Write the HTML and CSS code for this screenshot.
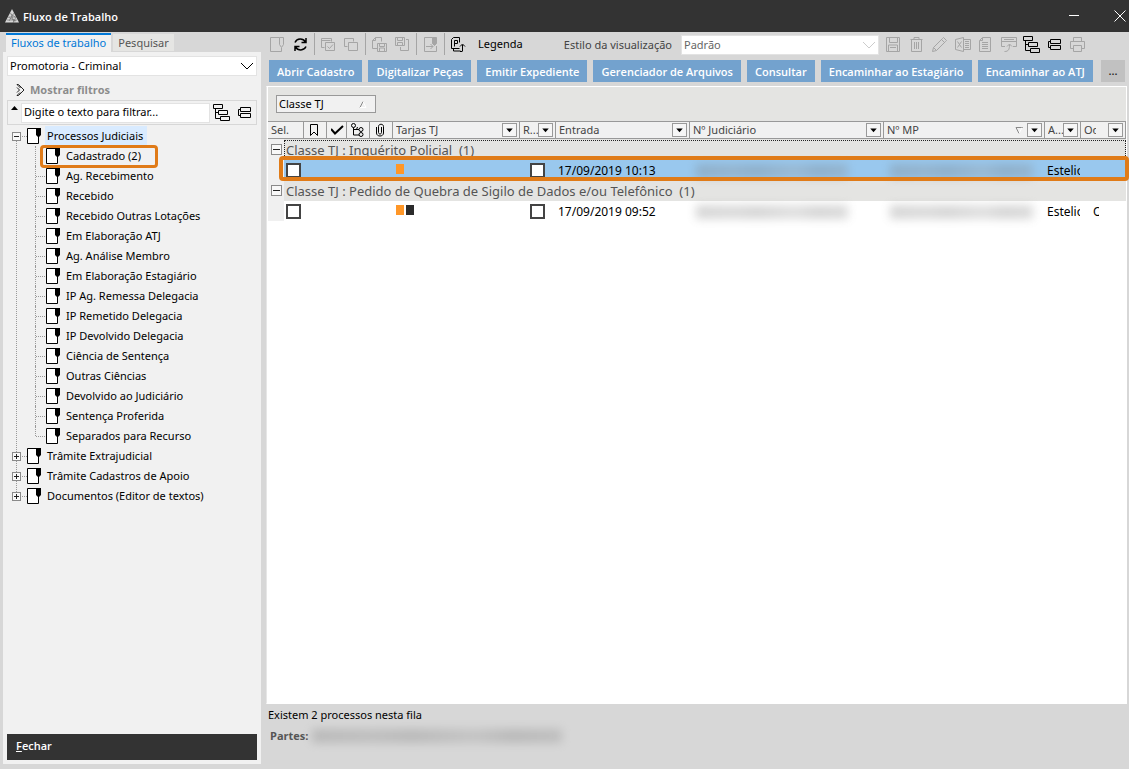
FILE: index.html
```html
<!DOCTYPE html>
<html lang="pt-BR">
<head>
<meta charset="utf-8">
<title>Fluxo de Trabalho</title>
<link rel="stylesheet" href="styles.css">
</head>
<body>
<svg class="defs" aria-hidden="true">
  <symbol id="page" viewBox="0 0 14 16"><path d="M.5.5h9v6l2 3v6h-11z" fill="#fff" stroke="none"/><path d="M10 .5H.5v15h11V8" fill="none" stroke="#000"/><path d="M9 0h5v7l-2 2h-1L9 7z" fill="#000" stroke="none"/></symbol>
  <symbol id="outline" viewBox="0 0 17 17"><path d="M.5.5h9v4h-9zM5.500 6.500h9v4h-9zM7.500 12.500h9v4h-9zM2.500 5v9.500H7M2.500 8.500H5"/></symbol>
  <symbol id="cards" viewBox="0 0 17 17"><path d="M4.500 3.500h10v4h-10zM4.500 9.500h10v4h-10zM4 5.500H2.500v6H4"/></symbol>
  <symbol id="down" viewBox="0 0 13 13"><path d="M3 5h7L6.500 9z" fill="#000" stroke="none"/></symbol>
</svg>

<header class="titlebar">
  <svg class="logo" viewBox="0 0 14 14"><path d="M7 0L14 13.500H0z" fill="#d8d8d8"/><path d="M5 4l5 4M3 8l8 4M9 4L4 12M11 8l-3 6M2 11h10M4 8h7M6 5l3 8" stroke="#555" stroke-width=".5" fill="none"/></svg>
  <h1>Fluxo de Trabalho</h1>
  <button class="win" aria-label="Minimizar"><svg viewBox="0 0 12 12"><path d="M1 5.500h10"/></svg></button>
  <button class="win" aria-label="Fechar janela"><svg viewBox="0 0 12 12"><path d="M.5.5l11 11M11.500.5l-11 11"/></svg></button>
</header>

<div class="window">
  <aside class="side">
    <nav class="tabs"><button class="tab active">Fluxos de trabalho</button><button class="tab">Pesquisar</button></nav>
    <div class="sidebody">
      <div class="combo promo">
        <select aria-label="Promotoria"><option>Promotoria - Criminal</option></select>
        <svg class="chev" viewBox="0 0 14 8"><path d="M1 1l6 6 6-6"/></svg>
      </div>
      <button class="filters"><svg viewBox="0 0 9 12"><path d="M1 .5h1.500L8 6l-5.500 5.500H1L4 8.500M1 .5l3.500 3.500M1 3.500L3.500 6 1 8.500"/></svg>Mostrar filtros</button>
      <div class="search">
        <svg class="up" viewBox="0 0 7 4"><path d="M0 4l3.500-4L7 4z"/></svg>
        <input type="text" aria-label="Filtrar" value="Digite o texto para filtrar...">
        <button class="tool" aria-label="Expandir"><svg><use href="#outline"/></svg></button>
        <button class="tool" aria-label="Recolher"><svg><use href="#cards"/></svg></button>
      </div>
      <ul class="tree">
        <li><div class="node"><button class="toggle" aria-label="Recolher"></button><svg><use href="#page"/></svg><span class="sel">Processos Judiciais</span></div>
          <ul>
            <li class="leaf marked"><svg><use href="#page"/></svg><span>Cadastrado (2)</span></li>
            <li class="leaf"><svg><use href="#page"/></svg><span>Ag. Recebimento</span></li>
            <li class="leaf"><svg><use href="#page"/></svg><span>Recebido</span></li>
            <li class="leaf"><svg><use href="#page"/></svg><span>Recebido Outras Lotações</span></li>
            <li class="leaf"><svg><use href="#page"/></svg><span>Em Elaboração ATJ</span></li>
            <li class="leaf"><svg><use href="#page"/></svg><span>Ag. Análise Membro</span></li>
            <li class="leaf"><svg><use href="#page"/></svg><span>Em Elaboração Estagiário</span></li>
            <li class="leaf"><svg><use href="#page"/></svg><span>IP Ag. Remessa Delegacia</span></li>
            <li class="leaf"><svg><use href="#page"/></svg><span>IP Remetido Delegacia</span></li>
            <li class="leaf"><svg><use href="#page"/></svg><span>IP Devolvido Delegacia</span></li>
            <li class="leaf"><svg><use href="#page"/></svg><span>Ciência de Sentença</span></li>
            <li class="leaf"><svg><use href="#page"/></svg><span>Outras Ciências</span></li>
            <li class="leaf"><svg><use href="#page"/></svg><span>Devolvido ao Judiciário</span></li>
            <li class="leaf"><svg><use href="#page"/></svg><span>Sentença Proferida</span></li>
            <li class="leaf"><svg><use href="#page"/></svg><span>Separados para Recurso</span></li>
          </ul>
        </li>
        <li><div class="node"><button class="toggle plus" aria-label="Expandir"></button><svg><use href="#page"/></svg><span>Trâmite Extrajudicial</span></div></li>
        <li><div class="node"><button class="toggle plus" aria-label="Expandir"></button><svg><use href="#page"/></svg><span>Trâmite Cadastros de Apoio</span></div></li>
        <li><div class="node"><button class="toggle plus" aria-label="Expandir"></button><svg><use href="#page"/></svg><span>Documentos (Editor de textos)</span></div></li>
      </ul>
      <button class="close"><u>F</u>echar</button>
    </div>
  </aside>

  <main class="main">
    <div class="toolbar">
      <button class="tool off" aria-label="Novo"><svg viewBox="0 0 17 17"><path d="M10.500 1.500h-9v14h11V12M10.500 1.500h4v7l-2 3-2-3z"/></svg></button>
      <button class="tool" aria-label="Atualizar"><svg viewBox="0 0 17 17"><path class="bold" d="M3 6.500C5 2 11 2 13.500 6M14 2v4.500H9.500M14 10.500c-2 4.500-8 4.500-10.500.5M3 15v-4.500h4.500"/></svg></button>
      <i class="sep"></i>
      <button class="tool off" aria-label="Selecionar"><svg viewBox="0 0 17 17"><path d="M4.500 11.500h-3v-9h10v3M1.500 4.500h9M5.500 6.500h9v8h-9zM7.500 10.500l2 2 3.500-4"/></svg></button>
      <button class="tool off" aria-label="Copiar"><svg viewBox="0 0 17 17"><path d="M4.500 10.500h-3v-8h9v3M5.500 6.500h9v8h-9z"/></svg></button>
      <i class="sep"></i>
      <button class="tool off" aria-label="Salvar página"><svg viewBox="0 0 17 17"><path d="M6 12.500H1.500v-8l3-3h6v4M4.500 1.500v3h-3M6.500 7.500h9v8h-9zM8.500 7.500v3h5v-3M8.500 15v-3h5v3"/></svg></button>
      <button class="tool off" aria-label="Salvar em"><svg viewBox="0 0 17 17"><path d="M1.500 1.500h9v8h-9zM3.500 1.500v3h5v-3M3.500 9V6.500h5V9M12 3.500h2.500v11h-8V11"/></svg></button>
      <i class="sep"></i>
      <button class="tool off" aria-label="Mover"><svg viewBox="0 0 17 17"><path d="M10.500 1.500h-8v14h12V10M4 10.500h7M8.500 8l2.500 2.500L8.500 13"/><path class="fill" d="M10.500 1.500h4v6l-2 2-2-2z"/></svg></button>
      <i class="sep"></i>
      <button class="tool" aria-label="Protocolo"><svg viewBox="0 0 17 17"><path d="M9.500 12.500h-8v-9l2-2h6v5M3.500 13v2h7M4.500 10.500v-6h3v3h-3M12.500 15V9M10 10.500l2.500-2.500L15 10.500M10 15.500h2.500"/></svg></button>
      <button class="legend">Legenda</button>
      <label class="stylelabel" for="vis">Estilo da visualização</label>
      <div class="combo vis"><select id="vis"><option>Padrão</option></select><svg class="chev" viewBox="0 0 14 8"><path d="M1 1l6 6 6-6"/></svg></div>
      <button class="tool off" aria-label="Salvar"><svg viewBox="0 0 17 17"><path d="M1.500 1.500h13v14h-13zM4.500 1.500v5h8v-5M3.500 15v-6h9v6M5 11.500h6"/></svg></button>
      <button class="tool off" aria-label="Excluir"><svg viewBox="0 0 17 17"><path d="M2.500 3.500h12M3.500 3.500v12h10v-12M6 3V1.500h5V3M6.500 6v7M8.500 6v7M10.500 6v7"/></svg></button>
      <button class="tool off" aria-label="Editar"><svg viewBox="0 0 17 17"><path d="M1.500 15.500l1-4 9-9 1-1 3 3-1 1-9 9zM10.500 3.500l3 3M2.500 11.500l3 3"/></svg></button>
      <button class="tool off" aria-label="Exportar planilha"><svg viewBox="0 0 17 17"><path d="M1.500 3.500l8-2v14l-8-2zM10 3.500h6.500v10H10M11 5.500h4M11 7.500h4M11 9.500h4M11 11.500h4M3.500 5.500l4 6M7.500 5.500l-4 6"/></svg></button>
      <button class="tool off" aria-label="Documento"><svg viewBox="0 0 17 17"><path d="M5.500 1.500h8v14h-11v-11zM5.500 2v2.500H3M5 6.500h6M5 8.500h6M5 10.500h6M5 12.500h6"/></svg></button>
      <button class="tool off" aria-label="Enviar janela"><svg viewBox="0 0 17 17"><path d="M5 10.500H1.500v-9h15v9H13M1.500 5.500h15M4 3.500h10M4.500 15.500c4 0 5-2 5-7M7 10.500L9.500 8l2.500 2.500"/></svg></button>
      <button class="tool" aria-label="Expandir grupos"><svg><use href="#outline"/></svg></button>
      <button class="tool" aria-label="Recolher grupos"><svg><use href="#cards"/></svg></button>
      <button class="tool off" aria-label="Imprimir"><svg viewBox="0 0 17 17"><path d="M4.500 5V1.500h8V5M4 12.500H1.500v-7h14v7H13M4.500 9.500h8v6h-8z"/></svg></button>
    </div>

    <div class="actions">
      <button>Abrir Cadastro</button><button>Digitalizar Peças</button><button>Emitir Expediente</button><button>Gerenciador de Arquivos</button><button>Consultar</button><button>Encaminhar ao Estagiário</button><button>Encaminhar ao ATJ</button><button class="more">...</button>
    </div>

    <section class="grid">
      <div class="groupby"><button>Classe TJ<svg viewBox="0 0 8 7"><path d="M1 6.500L4 .5" stroke="#888"/><path d="M4 .5l3 6H1" stroke="#fff"/></svg></button></div>
      <table>
        <colgroup><col class="c36"><col class="c23"><col class="c20"><col class="c23"><col class="c23"><col class="c127"><col class="c36"><col class="c134"><col><col class="c161"><col class="c36"><col class="c45"></colgroup>
        <thead><tr>
          <th>Sel.</th>
          <th aria-label="Marcador"><svg class="hi" viewBox="0 0 14 14"><path d="M2.500 1.500h7v11L6 9l-3.500 3.500z"/></svg></th>
          <th aria-label="Confirmado"><svg class="hi thick" viewBox="0 0 14 14"><path d="M0 6l4 4.500L12 3"/></svg></th>
          <th aria-label="Vínculos"><svg class="hi" viewBox="0 0 14 14"><path d="M2.500 4.500V12h6M3 6.500h5M5.500 6.500L6.500 4"/><circle cx="2.500" cy="2.500" r="2"/><circle cx="10" cy="6.500" r="2"/><circle cx="10" cy="11.500" r="2"/></svg></th>
          <th aria-label="Anexos"><svg class="hi" viewBox="0 0 14 14"><path d="M2.500 4v6c0 4 7 4 7 0V3.500c0-3-5-3-5 0v6c0 2 3 2 3 0V4"/></svg></th>
          <th><div class="th"><span>Tarjas TJ</span><button class="dd" aria-label="Filtrar"><svg><use href="#down"/></svg></button></div></th>
          <th><div class="th"><span>R...</span><button class="dd" aria-label="Filtrar"><svg><use href="#down"/></svg></button></div></th>
          <th><div class="th"><span>Entrada</span><button class="dd" aria-label="Filtrar"><svg><use href="#down"/></svg></button></div></th>
          <th><div class="th"><span>Nº Judiciário</span><button class="dd" aria-label="Filtrar"><svg><use href="#down"/></svg></button></div></th>
          <th><div class="th"><span>Nº MP</span><svg class="sort" viewBox="0 0 8 7"><path d="M8 .5H1l3 6" stroke="#888"/><path d="M4 6.500l3-6" stroke="#fff"/></svg><button class="dd" aria-label="Filtrar"><svg><use href="#down"/></svg></button></div></th>
          <th><div class="th"><span>A...</span><button class="dd" aria-label="Filtrar"><svg><use href="#down"/></svg></button></div></th>
          <th><div class="th"><span class="cut">Oo</span><button class="dd" aria-label="Filtrar"><svg><use href="#down"/></svg></button></div></th>
        </tr></thead>
        <tbody>
          <tr class="group focus"><td colspan="12"><div class="g"><button class="toggle big" aria-label="Recolher"></button><span>Classe TJ : Inquérito Policial&nbsp; (1)</span></div></td></tr>
          <tr class="row current"><td class="first"><input type="checkbox" aria-label="Selecionar"><i class="callout"></i></td><td></td><td></td><td></td><td></td><td><i class="tag"></i></td><td class="chk"><input type="checkbox" aria-label="R"></td><td>17/09/2019 10:13</td><td><i class="redact"></i></td><td><i class="redact"></i></td><td><div class="clip">Estelio</div></td><td></td></tr>
          <tr class="group"><td colspan="12"><div class="g"><button class="toggle big" aria-label="Recolher"></button><span>Classe TJ : Pedido de Quebra de Sigilo de Dados e/ou Telefônico&nbsp; (1)</span></div></td></tr>
          <tr class="row"><td class="first"><input type="checkbox" aria-label="Selecionar"></td><td></td><td></td><td></td><td></td><td><i class="tag"></i><i class="tag dark"></i></td><td class="chk"><input type="checkbox" aria-label="R"></td><td>17/09/2019 09:52</td><td><i class="redact"></i></td><td><i class="redact"></i></td><td><div class="clip">Estelio</div></td><td><div class="clip tiny">O</div></td></tr>
        </tbody>
      </table>
    </section>
    <footer>
      <p>Existem 2 processos nesta fila</p>
      <div class="parts"><b>Partes:</b><i class="redact"></i></div>
    </footer>
  </main>
</div>
</body>
</html>
```
FILE: styles.css
```css
*, *::before, *::after { box-sizing: border-box; }
body {
  margin: 0;
  height: 100vh;
  display: flex;
  flex-direction: column;
  background: #d7d7d7;
  color: #000;
  font: 11px/16px "Noto Sans", "Open Sans", sans-serif;
  overflow: hidden;
}
button, select, input { font: inherit; color: inherit; margin: 0; padding: 0; border: 0; background: none; border-radius: 0; }
svg { fill: none; stroke: currentColor; flex: none; display: block; }
ul { list-style: none; margin: 0; padding: 0; }
.defs { position: absolute; width: 0; height: 0; }

.titlebar { height: 32px; flex: none; display: flex; align-items: center; background: #333; color: #fff; padding: 0 3px 0 5px; }
.titlebar h1 { flex: 1; margin: 0; padding: 2px 0 0 4px; font: 600 11px/16px "Open Sans", sans-serif; }
.logo { width: 14px; height: 14px; stroke: none; }
.win { width: 12px; height: 12px; margin-left: 34px; }
.win svg { width: 12px; height: 12px; }

.window { flex: 1; min-height: 0; display: flex; gap: 5px; padding-left: 3px; }
.side { width: 258px; flex: none; display: flex; flex-direction: column; padding-bottom: 5px; }
.tabs { display: flex; height: 20px; gap: 2px; padding: 1px 3px 0; }
.tab { padding: 0 5px; background: #e5e5e3; color: #555; height: 17px; margin-top: 1px; }
.tab.active { height: 19px; margin: 0; background: #f1f1f1; color: #0078d7; border-top: 2px solid #0078d7; line-height: 14px; padding-bottom: 2px; }
.sidebody { flex: 1; display: flex; flex-direction: column; background: #f1f1f1; padding: 4px; }

.combo { position: relative; display: flex; background: #fff; border: 1px solid #e3e3e3; }
.combo select { flex: 1; min-width: 0; appearance: none; padding: 0 20px 0 2px; background: transparent; }
.chev { position: absolute; right: 2px; top: 5px; width: 14px; height: 8px; pointer-events: none; }
.promo { height: 20px; }
.filters { display: flex; align-items: center; gap: 5px; height: 18px; margin: 5px 0 1px 9px; color: #8c8c8c; font: 700 11px/16px "Open Sans", sans-serif; }
.filters svg { width: 9px; height: 12px; color: #222; }
.search { display: flex; align-items: center; height: 25px; border: 1px solid #d7d7d7; }
.up { width: 7px; height: 4px; margin: 0 3px 10px 3px; fill: #000; stroke: none; }
.search input { flex: 1; min-width: 0; height: 20px; padding: 0 2px 2px; border: 1px solid #e3e3e3; background: #fff; }
.tool { width: 23px; height: 24px; flex: none; display: grid; place-items: center; }
.tool svg { width: 17px; height: 17px; }
.off { color: #a5a5a5; }
.fill { fill: currentColor; }
.bold { stroke-width: 1.5; }

.tree { position: relative; flex: 1; padding-top: 1px; }
.tree::before { content: ""; position: absolute; left: 9px; top: 15px; height: 356px; border-left: 1px dotted #999; }
.node, .leaf { position: relative; display: flex; align-items: center; height: 20px; }
.node { padding-left: 5px; }
.node > svg, .leaf > svg { width: 14px; height: 16px; }
.node > svg { margin-left: 6px; }
.node > span, .leaf > span { margin-left: 4px; padding: 2px 2px; }
.node::before { content: ""; position: absolute; left: 15px; top: 10px; width: 5px; border-top: 1px dotted #999; }
.leaf { padding-left: 39px; }
.leaf::before { content: ""; position: absolute; left: 28px; top: 0; width: 10px; height: 20px; border-left: 1px dotted #999; }
.leaf:last-child::before { height: 10px; }
.leaf::after { content: ""; position: absolute; left: 29px; top: 10px; width: 9px; border-top: 1px dotted #999; }
.leaf.marked::after { left: 33px; top: -1px; width: 118px; height: 23px; border: 3px solid #e07b18; border-radius: 4px; z-index: 1; }
.node > .sel { background: #d9ebff; padding-right: 4px; }
.toggle { position: relative; width: 9px; height: 9px; border: 1px solid #8a8a8a; background: #f8f8f8; flex: none; }
.toggle::before { content: ""; position: absolute; left: 1px; right: 1px; top: 3px; height: 1px; background: #222; }
.toggle.plus::after { content: ""; position: absolute; top: 1px; bottom: 1px; left: 3px; width: 1px; background: #222; }
.toggle.big { width: 11px; height: 11px; }
.toggle.big::before { top: 4px; }
.close { height: 26px; background: #333; color: #fff; text-align: left; padding: 0 9px 2px; font: 600 11px/16px "Open Sans", sans-serif; }

.main { flex: 1; min-width: 0; display: flex; flex-direction: column; padding-right: 2px; }
.toolbar { display: flex; align-items: center; height: 24px; color: #000; padding-right: 38px; }
.sep { width: 1px; height: 22px; margin: 0 2px; background: #a5a5a5; }
.legend { margin-left: 8px; }
.stylelabel { margin-left: auto; margin-right: 9px; padding-top: 2px; color: #444; }
.vis { width: 198px; height: 20px; margin: 1px 3px 0 0; color: #666; }
.vis .chev { color: #ccc; }

.actions { display: flex; gap: 6px; padding: 4px 2px 0 3px; }
.actions button { flex: 1 0 auto; height: 22px; padding: 2px 8px 0; background: #73a2ce; color: #fff; font: 600 11px/16px "Open Sans", sans-serif; white-space: nowrap; }
.actions .more { flex: none; width: 24px; padding: 0; margin-left: 2px; background: #c1c1c1; color: #222; }

.grid { flex: 1; margin-top: 4px; background: #fff; border: 1px solid #fff; border-left: 1px solid #e6e6e6; padding-left: 1px; }
.groupby { height: 34px; padding: 8px; background: #e4e4e2; }
.groupby button { display: flex; align-items: center; justify-content: space-between; width: 100px; height: 18px; padding: 0 8px 0 2px; background: #f1f1f1; border: 1px solid #999; }
.groupby svg { width: 8px; height: 7px; }
table { width: 100%; table-layout: fixed; border-collapse: separate; border-spacing: 0; }
.c20 { width: 20px; } .c23 { width: 23px; } .c36 { width: 36px; } .c45 { width: 45px; }
.c127 { width: 127px; } .c134 { width: 134px; } .c161 { width: 161px; }
th { height: 18px; padding: 0 0 0 3px; font-weight: 400; text-align: left; color: #444; background: #f1f1f1; border-top: 1px solid #999; border-bottom: 1px solid #999; border-right: 1px solid #999; }
.hi { width: 14px; height: 14px; color: #000; margin-left: 1px; }
.thick { stroke-width: 2; }
.th { display: flex; align-items: center; }
.th span { flex: 1; min-width: 0; overflow: hidden; white-space: nowrap; }
.th .cut { flex: none; width: 12px; margin-right: auto; }
.sort { width: 8px; height: 7px; margin-right: 4px; }
.dd { flex: none; width: 15px; height: 14px; margin-right: 2px; border: 1px solid #999; background: #f6f6f6; }
.dd svg { width: 13px; height: 12px; }
td { padding: 0; }
.group td { height: 21px; background: linear-gradient(90deg, #f0f0f0 16px, #e4e4e2 16px); }
.g { display: flex; align-items: center; gap: 4px; height: 21px; padding-left: 3px; font-size: 13px; color: #555; }
.focus .g { position: relative; }
.focus .g::after { content: ""; position: absolute; left: 16px; right: 0; top: 1px; bottom: 0; border: 1px dotted #222; border-bottom: 0; }
.row { position: relative; font-size: 12px; }
.row td { height: 20px; padding: 1px 0 0 2px; white-space: nowrap; }
.current td { background: #99c8ee; }
.row td.first { padding: 0 0 0 18px; background: linear-gradient(90deg, #f0f0f0 16px, transparent 16px); }
.current td.first { background: linear-gradient(90deg, #f0f0f0 16px, #99c8ee 16px); }
.row td.chk { padding: 0 0 0 10px; }
input[type="checkbox"] { display: block; appearance: none; width: 15px; height: 15px; border: 2px solid #444; background: #fff; }
.tag { display: block; float: left; width: 8px; height: 10px; margin: 0 1px 4px 1px; background: #ff9728; }
.dark { background: #2b2b2b; }
.callout { position: absolute; left: 11px; right: -3px; top: -4px; bottom: -1px; border: 4px solid #e07b18; border-radius: 4px; z-index: 1; }
.redact { display: block; height: 14px; margin: 0 36px 0 4px; background: linear-gradient(90deg, #777, #888 25%, #777 40%, #999 65%, #777 80%, #888); filter: blur(5px); opacity: .3; }
.row td:nth-child(10) .redact { margin-right: 12px; }
.clip { width: 33px; overflow: hidden; }
.tiny { width: 6px; margin-left: 10px; }

footer { height: 65px; padding: 3px 2px 0; }
footer p { margin: 0; }
.parts { display: flex; align-items: center; height: 26px; padding-left: 2px; color: #555; }
.parts b { font: 700 11px/16px "Open Sans", sans-serif; }
.parts .redact { width: 250px; height: 14px; margin: 0 0 0 4px; }
```
